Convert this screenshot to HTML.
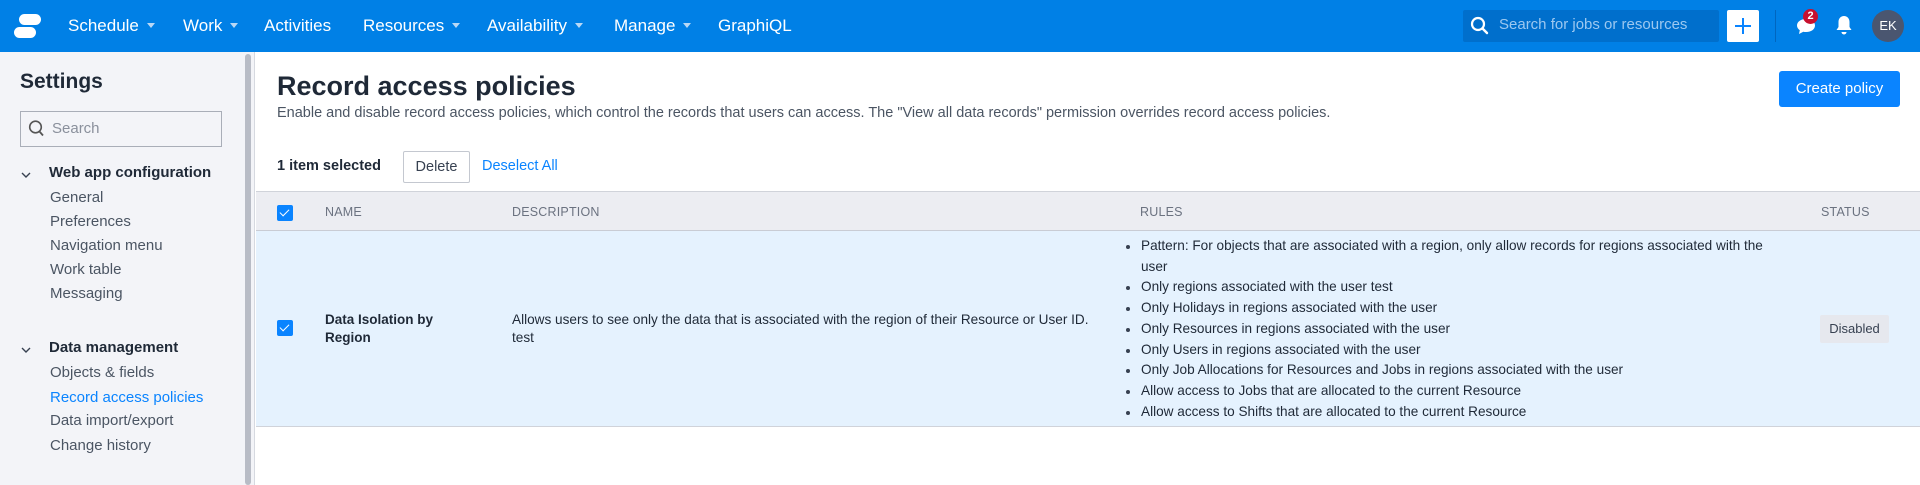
<!DOCTYPE html>
<html><head><meta charset="utf-8"><style>
*{box-sizing:border-box;margin:0;padding:0}
body{width:1920px;height:485px;overflow:hidden;font-family:"Liberation Sans",sans-serif;color:#1f2937;background:#fff;position:relative;font-size:14px}
.abs{position:absolute}
.nav{left:0;top:0;width:1920px;height:52px;background:#0080e6}
.nav .it{position:absolute;top:16px;color:#fff;font-size:17px;white-space:nowrap}
.car{display:inline-block;width:0;height:0;border-left:4px solid transparent;border-right:4px solid transparent;border-top:5px solid #b9d8f5;margin-left:8px;vertical-align:3px}
.side{left:0;top:52px;width:255px;height:433px;background:#f3f4f8;border-right:1px solid #d6d9e0}
.sl{position:absolute;left:50px;font-size:15px;color:#4b5563}
.sh{position:absolute;left:49px;font-size:15px;font-weight:bold;color:#1f2937}
.chev{position:absolute;left:21px;width:10px;height:10px}
.th{position:absolute;top:205px;font-size:12.5px;color:#6b7280;letter-spacing:.2px}
.cb{position:absolute;width:16px;height:16px;background:#0a84ff;border-radius:2px}
.cb:after{content:"";position:absolute;left:5px;top:2px;width:4px;height:8px;border:solid #fff;border-width:0 1.6px 1.6px 0;transform:rotate(45deg)}
ul{position:absolute;left:1126px;top:236px;list-style:none;font-size:13.6px;line-height:20.7px;color:#1f2937;width:662px}
li{padding-left:15px;position:relative}
li:before{content:"";position:absolute;left:0;top:9px;width:4px;height:4px;border-radius:50%;background:#374151}
</style></head><body>
<div class="abs nav">
 <svg class="abs" style="left:14px;top:14px" width="32" height="24" viewBox="0 0 32 24"><rect x="5" y="0" width="22" height="11" rx="5.5" fill="#fff"/><rect x="0" y="13" width="22" height="11" rx="5.5" fill="#fff"/></svg>
 <span class="it" style="left:68px">Schedule<span class="car"></span></span>
 <span class="it" style="left:183px">Work<span class="car"></span></span>
 <span class="it" style="left:264px">Activities</span>
 <span class="it" style="left:363px">Resources<span class="car"></span></span>
 <span class="it" style="left:487px">Availability<span class="car"></span></span>
 <span class="it" style="left:614px">Manage<span class="car"></span></span>
 <span class="it" style="left:718px">GraphiQL</span>
 <div class="abs" style="left:1463px;top:10px;width:256px;height:32px;background:#006fcc;border-radius:2px"></div>
 <svg class="abs" style="left:1470px;top:16px" width="20" height="20" viewBox="0 0 20 20"><circle cx="8" cy="8" r="6" fill="none" stroke="#fff" stroke-width="2.2"/><path d="M12.5 12.5L17 17" stroke="#fff" stroke-width="2.4" stroke-linecap="round"/></svg>
 <span class="abs" style="left:1499px;top:16px;color:#9cc8f0;font-size:15px">Search for jobs or resources</span>
 <div class="abs" style="left:1727px;top:10px;width:32px;height:32px;background:#fff;border-radius:2px"></div>
 <svg class="abs" style="left:1733px;top:16px" width="20" height="20"><path d="M10 2V18M2 10H18" stroke="#0a84ff" stroke-width="2"/></svg>
 <div class="abs" style="left:1775px;top:10px;width:1px;height:32px;background:#0066bf"></div>
 <svg class="abs" style="left:1795px;top:17px" width="22" height="20" viewBox="0 0 22 20"><path d="M11 2C5.5 2 2 5 2 8.5c0 2 1.1 3.6 2.8 4.7L4 17l4.3-2.3c.9.2 1.8.3 2.7.3 5.5 0 9-3 9-6.5S16.5 2 11 2z" fill="#fff"/></svg>
 <div class="abs" style="left:1803px;top:9px;width:15px;height:15px;border-radius:50%;background:#c8102e;color:#fff;font-size:11px;font-weight:bold;text-align:center;line-height:15px">2</div>
 <svg class="abs" style="left:1835px;top:14px" width="18" height="22" viewBox="0 0 18 22"><path d="M9 2c-3.3 0-5.5 2.6-5.5 6v5L1.5 16h15l-2-3V8c0-3.4-2.2-6-5.5-6z" fill="#fff"/><path d="M6.5 18a2.5 2.5 0 0 0 5 0z" fill="#fff"/></svg>
 <div class="abs" style="left:1872px;top:10px;width:32px;height:32px;border-radius:50%;background:#4a5670;color:#fff;font-size:13px;text-align:center;line-height:32px">EK</div>
</div>

<div class="abs side">
 <div class="abs" style="left:245px;top:2px;width:6px;height:431px;background:#b8bcc6;border-radius:3px"></div>
 <div class="abs" style="left:20px;top:18px;font-size:21px;font-weight:bold;color:#1f2937">Settings</div>
 <div class="abs" style="left:20px;top:59px;width:202px;height:36px;border:1px solid #a9aeb8;background:#f3f4f8"></div>
 <svg class="abs" style="left:28px;top:67px" width="18" height="20" viewBox="0 0 18 20"><circle cx="7.5" cy="8" r="5.8" fill="none" stroke="#555" stroke-width="1.6"/><path d="M11.5 12.5L15 16.5" stroke="#555" stroke-width="1.8"/></svg>
 <span class="abs" style="left:52px;top:68px;color:#8a909c;font-size:15px">Search</span>
 <svg class="chev" style="top:118px" viewBox="0 0 10 10"><path d="M1 3L5 7L9 3" fill="none" stroke="#374151" stroke-width="1.4"/></svg><span class="sh" style="top:112px">Web app configuration</span>
 <span class="sl" style="top:137px">General</span>
 <span class="sl" style="top:161px">Preferences</span>
 <span class="sl" style="top:185px">Navigation menu</span>
 <span class="sl" style="top:209px">Work table</span>
 <span class="sl" style="top:233px">Messaging</span>
 <svg class="chev" style="top:293px" viewBox="0 0 10 10"><path d="M1 3L5 7L9 3" fill="none" stroke="#374151" stroke-width="1.4"/></svg><span class="sh" style="top:287px">Data management</span>
 <span class="sl" style="top:312px">Objects &amp; fields</span>
 <span class="sl" style="top:337px;color:#0a84ff">Record access policies</span>
 <span class="sl" style="top:360px">Data import/export</span>
 <span class="sl" style="top:385px">Change history</span>
</div>

<div class="abs" style="left:277px;top:71px;font-size:27px;font-weight:bold;color:#1f2937">Record access policies</div>
<div class="abs" style="left:277px;top:105px;font-size:14.5px;color:#4b5563">Enable and disable record access policies, which control the records that users can access. The "View all data records" permission overrides record access policies.</div>
<div class="abs" style="left:1779px;top:71px;width:121px;height:36px;background:#0a84ff;border-radius:3px;color:#fff;font-size:15px;text-align:center;line-height:36px">Create policy</div>

<div class="abs" style="left:277px;top:158px;font-size:14.5px;font-weight:bold">1 item selected</div>
<div class="abs" style="left:403px;top:151px;width:67px;height:32px;border:1px solid #c4c8d0;border-radius:2px;text-align:center;line-height:30px;font-size:14.5px;color:#374151">Delete</div>
<div class="abs" style="left:482px;top:158px;font-size:14.5px;color:#0a84ff">Deselect All</div>

<div class="abs" style="left:256px;top:191px;width:1664px;height:40px;background:#ecedf2;border-top:1px solid #d0d3da;border-bottom:1px solid #c9ccd4"></div>
<div class="cb" style="left:277px;top:205px"></div>
<span class="th" style="left:325px">NAME</span>
<span class="th" style="left:512px">DESCRIPTION</span>
<span class="th" style="left:1140px">RULES</span>
<span class="th" style="left:1821px">STATUS</span>

<div class="abs" style="left:256px;top:231px;width:1664px;height:196px;background:#e5f2fe;border-bottom:1px solid #d0d3da"></div>
<div class="cb" style="left:277px;top:320px"></div>
<div class="abs" style="left:325px;top:311px;font-size:13.5px;font-weight:bold;line-height:18px;width:130px">Data Isolation by Region</div>
<div class="abs" style="left:512px;top:311px;font-size:13.6px;line-height:18px;width:592px">Allows users to see only the data that is associated with the region of their Resource or User ID. test</div>
<ul>
<li>Pattern: For objects that are associated with a region, only allow records for regions associated with the user</li>
<li>Only regions associated with the user test</li>
<li>Only Holidays in regions associated with the user</li>
<li>Only Resources in regions associated with the user</li>
<li>Only Users in regions associated with the user</li>
<li>Only Job Allocations for Resources and Jobs in regions associated with the user</li>
<li>Allow access to Jobs that are allocated to the current Resource</li>
<li>Allow access to Shifts that are allocated to the current Resource</li>
</ul>
<div class="abs" style="left:1820px;top:315px;width:69px;height:28px;background:#e6e8ee;border-radius:2px;text-align:center;line-height:28px;font-size:13px;color:#374151">Disabled</div>
</body></html>
